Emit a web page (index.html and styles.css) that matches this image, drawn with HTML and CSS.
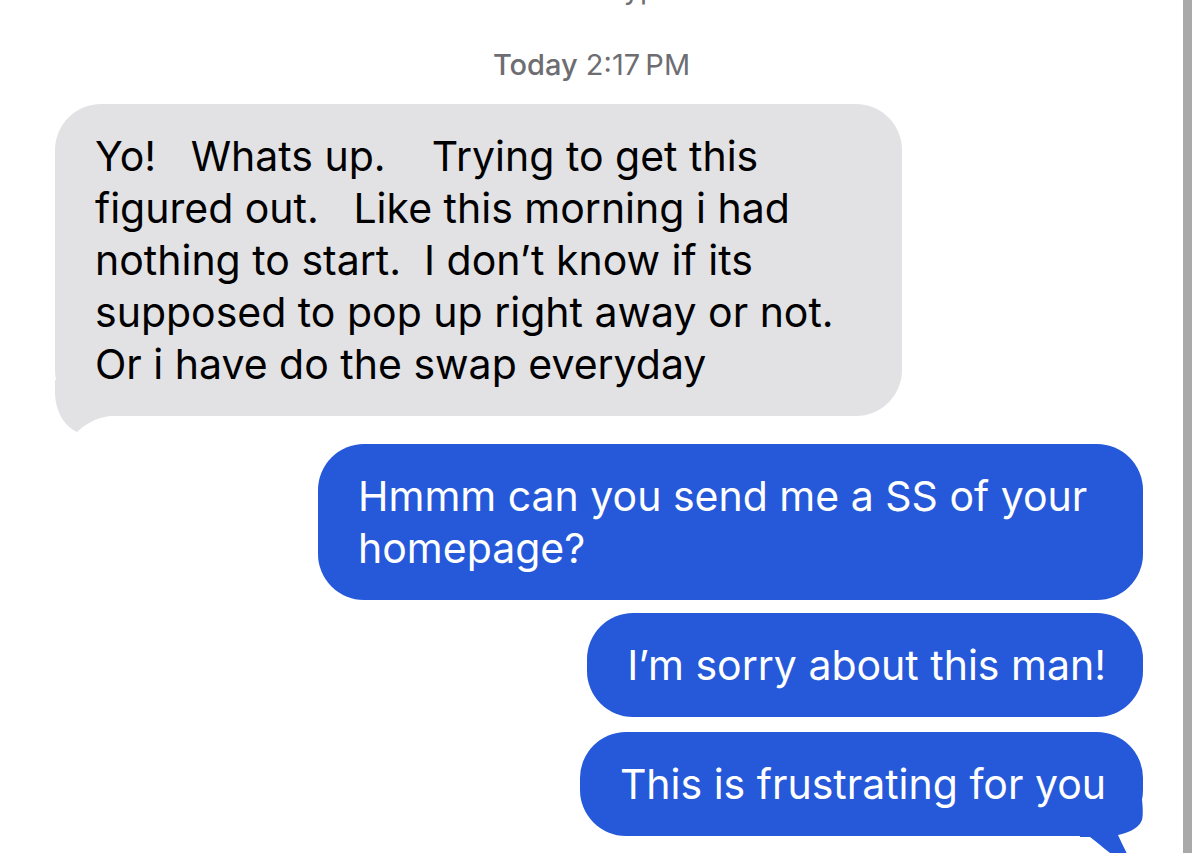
FILE: index.html
```
<!DOCTYPE html>
<html lang="en">
  <head>
    <meta charset="UTF-8" />
    <meta name="viewport" content="width=device-width, initial-scale=1.0" />
    <title>Messages</title>
    <link rel="stylesheet" href="styles.css">
  </head>
  <body>
    <div class="screen">
      <main class="thread">
        <p class="thread__status">Encrypted</p>
        <p class="thread__time"><strong>Today</strong> 2:17&#8201;PM</p>

        <div class="bubble bubble--in bubble--tail">
          <p class="bubble__text">Yo!   Whats up.    Trying to get this<br>figured out.   Like this morning i had<br>nothing to start.  I don’t know if its<br>supposed to pop up right away or not.<br>Or i have do the swap everyday</p>
        </div>

        <div class="bubble bubble--out bubble--wide">
          <p class="bubble__text">Hmmm can you send me a SS of your<br>homepage?</p>
        </div>
        <div class="bubble bubble--out bubble--next">
          <p class="bubble__text">I’m sorry about this man!</p>
        </div>
        <div class="bubble bubble--out bubble--next bubble--tail">
          <p class="bubble__text">This is frustrating for you</p>
        </div>
      </main>
      <div class="scrollbar"></div>
    </div>
  </body>
</html>
```

FILE: styles.css
```
* {
  box-sizing: border-box;
}

html,
body {
  margin: 0;
  height: 100%;
  overflow: hidden;
  background: #fff;
}

body {
  font-family: Inter, 'Noto Sans', 'Liberation Sans', sans-serif;
  color: #000;
}

.screen {
  display: flex;
  height: 100%;
}

.thread {
  flex: 1;
  display: flex;
  flex-direction: column;
}

.thread__status,
.thread__time {
  margin: 0;
  text-align: center;
  font-size: 29px;
  line-height: 34px;
  color: #6d6d72;
}

.thread__status {
  margin-top: -28px;
  padding-left: 80px;
}

.thread__time {
  margin-top: 42px;
}

.thread__time strong {
  font-weight: 500;
}

.bubble {
  position: relative;
  z-index: 0;
  max-width: 860px;
  padding: 26px 40px;
  border-radius: 46px;
}

.bubble__text {
  margin: 0;
  font-size: 41px;
  line-height: 52px;
  white-space: pre-wrap;
}

.bubble--in {
  align-self: flex-start;
  width: 847px;
  margin: 22px 0 0 55px;
  background: #e2e2e4;
  color: #000;
}

.bubble--out {
  align-self: flex-end;
  margin-right: 40px;
  padding-right: 37px;
  background: #2559da;
  color: #fff;
}

.bubble--wide {
  width: 825px;
  margin-top: 28px;
}

.bubble--next {
  margin-top: 13px;
}

.bubble--next + .bubble--next {
  margin-top: 15px;
}

/* speech tails, cut out of a small box at the bubble's corner and kept under the text */
.bubble--tail::after {
  content: "";
  position: absolute;
  z-index: -1;
  width: 70px;
  background: inherit;
  border-radius: 0;
}

.bubble--in.bubble--tail::after {
  left: -5px;
  bottom: -24px;
  height: 60px;
  clip-path: path('M 5 0 L 5 14 C 6 34 16 47 27 52 C 34 45 45 38 60 36 L 60 0 Z');
}

.bubble--out.bubble--tail::after {
  right: -7px;
  bottom: -34px;
  height: 70px;
  clip-path: path('M 0 0 L 62 0 C 63 8 63 16 62 20 C 58 30 46 33 38 35 C 44 48 50 60 56 70 C 40 62 24 48 10 37 L 0 37 Z');
}

.scrollbar {
  flex: none;
  width: 9px;
  margin-right: 8px;
  background: #a9a9a9;
}
```
